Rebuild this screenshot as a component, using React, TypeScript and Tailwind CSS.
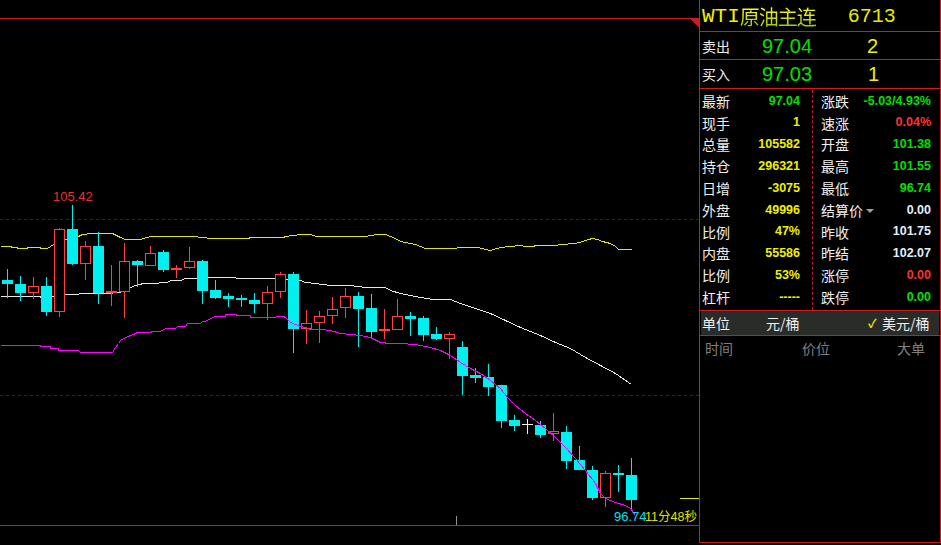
import React from "react";

// [bodyTop, bodyBottom, wickTop, wickBottom, kind] ; kind: c = falling (cyan), r = rising (red), w = doji
type Candle = [number, number, number, number, "c" | "r" | "w"];

const candles: Candle[] = [
  [280, 284, 269, 298, "c"],
  [284, 293, 276, 301, "c"],
  [286, 293, 277, 299, "r"],
  [286, 312, 277, 316, "c"],
  [229, 312, 228, 317, "r"],
  [229, 264, 205, 265, "c"],
  [246, 264, 241, 280, "r"],
  [246, 293, 232, 304, "c"],
  [291, 293, 265, 306, "r"],
  [261, 292, 243, 318, "r"],
  [261, 265, 260, 287, "c"],
  [253, 266, 246, 266, "r"],
  [252, 270, 250, 272, "c"],
  [268, 270, 265, 278, "r"],
  [261, 268, 247, 269, "r"],
  [261, 291, 260, 304, "c"],
  [290, 298, 280, 299, "c"],
  [296, 299, 293, 307, "c"],
  [298, 300, 295, 307, "c"],
  [300, 304, 293, 313, "c"],
  [292, 304, 286, 320, "r"],
  [274, 292, 272, 298, "r"],
  [274, 329, 272, 353, "c"],
  [323, 329, 310, 344, "r"],
  [316, 323, 311, 343, "r"],
  [309, 316, 297, 324, "r"],
  [296, 308, 288, 318, "r"],
  [296, 309, 292, 347, "c"],
  [308, 332, 294, 337, "c"],
  [329, 331, 309, 339, "r"],
  [316, 330, 299, 330, "r"],
  [316, 319, 312, 336, "c"],
  [318, 335, 316, 341, "c"],
  [334, 339, 327, 340, "c"],
  [334, 339, 332, 359, "r"],
  [347, 376, 341, 395, "c"],
  [375, 378, 368, 383, "c"],
  [377, 387, 364, 396, "c"],
  [385, 421, 385, 428, "c"],
  [420, 426, 415, 431, "c"],
  [424, 425, 419, 434, "w"],
  [425, 435, 421, 438, "c"],
  [431, 434, 413, 441, "r"],
  [432, 461, 426, 469, "c"],
  [460, 470, 446, 470, "c"],
  [470, 498, 466, 500, "c"],
  [473, 498, 471, 507, "r"],
  [473, 475, 465, 492, "c"],
  [475, 500, 458, 511, "c"],
];

const upper = [
  [0, 246], [10, 246], [12, 247], [17, 247], [17, 248], [27, 248], [27, 247], [40, 247], [40, 248], [47, 248],
  [50, 246], [53, 244], [57, 241], [60, 240], [70, 239], [74, 238], [78, 236], [82, 234], [92, 233], [112, 233],
  [116, 235], [120, 237], [125, 239], [140, 239], [143, 238], [150, 236], [195, 236], [200, 237], [212, 238],
  [248, 238], [250, 237], [283, 237], [285, 236], [300, 234], [310, 234], [316, 236], [365, 236], [370, 235],
  [378, 234], [385, 234], [390, 236], [395, 238], [400, 241], [410, 243], [415, 244], [420, 246], [425, 248],
  [455, 248], [458, 247], [478, 247], [485, 249], [490, 250], [493, 249], [500, 247], [510, 246], [520, 245],
  [525, 246], [533, 246], [535, 245], [555, 245], [560, 244], [575, 243], [582, 241], [588, 239], [592, 238],
  [597, 239], [602, 241], [610, 243], [615, 246], [618, 249], [631, 249],
];

const middle = [
  [0, 296], [40, 296], [40, 297], [49, 297], [50, 296], [57, 296], [57, 294], [78, 294], [79, 293], [112, 293],
  [113, 292], [120, 292], [122, 290], [128, 288], [135, 285], [143, 283], [157, 283], [160, 282], [167, 282],
  [170, 280], [180, 280], [185, 278], [195, 278], [205, 277], [235, 277], [236, 278], [280, 278], [285, 279],
  [300, 280], [305, 282], [315, 283], [330, 285], [350, 285], [365, 287], [385, 287], [390, 290], [400, 293],
  [420, 297], [433, 299], [450, 299], [460, 303], [475, 308], [490, 313], [505, 320], [520, 327], [540, 335],
  [555, 342], [570, 348], [585, 357], [600, 365], [615, 373], [631, 384],
];

const lower = [
  [0, 345], [40, 345], [40, 346], [50, 346], [50, 348], [58, 348], [58, 350], [78, 350], [80, 352], [112, 352],
  [115, 347], [118, 343], [120, 340], [125, 337], [133, 334], [137, 332], [150, 332], [152, 331], [160, 331],
  [165, 328], [175, 328], [177, 326], [185, 326], [187, 323], [200, 323], [202, 321], [205, 321], [210, 318],
  [215, 316], [225, 316], [225, 314], [235, 314], [237, 315], [250, 315], [250, 317], [275, 317], [276, 316],
  [283, 316], [285, 317], [290, 322], [295, 324], [300, 326], [305, 327], [310, 329], [320, 329], [330, 330],
  [340, 333], [360, 335], [370, 337], [380, 342], [390, 343], [400, 343], [415, 344], [420, 345], [430, 347],
  [440, 350], [450, 355], [460, 362], [470, 368], [480, 373], [490, 380], [500, 388], [507, 397], [515, 405],
  [525, 413], [535, 420], [545, 428], [555, 437], [565, 447], [575, 458], [585, 470], [595, 483], [600, 493],
  [605, 498], [615, 502], [625, 505], [630, 508], [635, 515],
];

const pts = (a: number[][]) => a.map(([x, y]) => `${x + 0.5},${y + 0.5}`).join(" ");

const CYAN = "#00f0f0";
const RED = "#ff4040";
const LINE = "#c81e1e";

const leftStats: [string, string, string][] = [
  ["最新", "97.04", "text-[#00e000]"],
  ["现手", "1", "text-[#f0f000]"],
  ["总量", "105582", "text-[#f0f000]"],
  ["持仓", "296321", "text-[#f0f000]"],
  ["日增", "-3075", "text-[#f0f000]"],
  ["外盘", "49996", "text-[#f0f000]"],
  ["比例", "47%", "text-[#f0f000]"],
  ["内盘", "55586", "text-[#f0f000]"],
  ["比例", "53%", "text-[#f0f000]"],
  ["杠杆", "-----", "text-[#f0f000]"],
];

const rightStats: [string, string, string][] = [
  ["涨跌", "-5.03/4.93%", "text-[#00e000]"],
  ["速涨", "0.04%", "text-[#ff3030]"],
  ["开盘", "101.38", "text-[#00e000]"],
  ["最高", "101.55", "text-[#00e000]"],
  ["最低", "96.74", "text-[#00e000]"],
  ["结算价", "0.00", "text-[#e0f0ff]"],
  ["昨收", "101.75", "text-[#e0f0ff]"],
  ["昨结", "102.07", "text-[#e0f0ff]"],
  ["涨停", "0.00", "text-[#ff3030]"],
  ["跌停", "0.00", "text-[#00e000]"],
];

const Chart = () => (
  <div className="relative w-[699px] h-[545px] shrink-0">
    <svg width={699} height={545} className="block" shapeRendering="crispEdges">
      <line x1={0} y1={18.5} x2={699} y2={18.5} stroke={LINE} />
      <polygon points="689,18 699,18 699,28" fill={LINE} />
      <line x1={0} y1={219.5} x2={699} y2={219.5} stroke="#8a0000" strokeDasharray="3 3" />
      <line x1={0} y1={395.5} x2={699} y2={395.5} stroke="#8a0000" strokeDasharray="3 3" />
      <line x1={0} y1={525.5} x2={699} y2={525.5} stroke={LINE} />
      <line x1={456.5} y1={516} x2={456.5} y2={525} stroke="#909090" />
      <line x1={680} y1={498.5} x2={699} y2={498.5} stroke="#e6e600" />

      <polyline points={pts(upper)} fill="none" stroke="#e6e600" />
      <polyline points={pts(middle)} fill="none" stroke="#e8e8e8" />

      {candles.map(([t, b, wt, wb, k], i) => {
        const x = 2 + 13 * i;
        if (k === "c")
          return (
            <g key={i}>
              <rect x={x + 5} y={wt} width={1} height={wb - wt} fill={CYAN} />
              <rect x={x} y={t} width={11} height={Math.max(b - t, 1)} fill={CYAN} />
            </g>
          );
        if (k === "w")
          return (
            <g key={i}>
              <rect x={x + 5} y={wt} width={1} height={wb - wt} fill="#f0f0f0" />
              <rect x={x} y={t} width={11} height={1} fill="#f0f0f0" />
            </g>
          );
        return (
          <g key={i}>
            <rect x={x + 5} y={wt} width={1} height={wb - wt} fill={RED} />
            <rect x={x + 0.5} y={t + 0.5} width={10} height={Math.max(b - t - 1, 1)} fill="#000" stroke={RED} />
          </g>
        );
      })}

      <polyline points={pts(lower)} fill="none" stroke="#ff00ff" />
    </svg>

    <span className="absolute left-[53px] top-[190px] text-[13px] leading-[14px] text-[#e83030] font-['Liberation_Sans',sans-serif]">
      105.42
    </span>
    <span className="absolute left-[614px] top-[510px] text-[13px] leading-[14px] text-[#00e0f0] font-['Liberation_Sans',sans-serif]">
      96.74
    </span>
    <span className="absolute left-[645px] top-[510px] text-[12.5px] leading-[14px] text-[#e0e000] font-['Liberation_Sans','Noto_Sans_CJK_SC',sans-serif]">
      11分48秒
    </span>
  </div>
);

const Panel = () => (
  <div className="w-[242px] h-[543px] border-l border-r border-b border-[#c81e1e] flex flex-col font-['Liberation_Sans','Noto_Sans_CJK_SC',sans-serif]">
    {/* title */}
    <div className="h-[32px] border-b border-[#c81e1e] flex items-center pl-[2px] pt-[2px]">
      <span className="text-[21px] leading-none font-['Liberation_Mono',monospace] text-[#f0f000]">WTI</span>
      <span className="text-[20px] tracking-[-1px] leading-none font-['Noto_Sans_CJK_SC',sans-serif] bg-gradient-to-b from-[#ffff20] to-[#a8c800] bg-clip-text text-transparent">
        原油主连
      </span>
      <span className="ml-[32px] text-[20px] leading-none font-['Liberation_Mono',monospace] text-[#e8e800]">6713</span>
    </div>

    {/* bid / ask */}
    <div className="h-[28px] border-b border-[#c81e1e] flex items-center pl-[2px]">
      <span className="w-[60px] text-[14px] leading-none text-[#f0f0f0] font-['Noto_Sans_CJK_SC',sans-serif]">卖出</span>
      <span className="w-[105px] text-[20px] leading-none text-[#00e000]">97.04</span>
      <span className="text-[20px] leading-none text-[#f0f000]">2</span>
    </div>
    <div className="h-[29px] border-b border-[#c81e1e] flex items-center pl-[2px]">
      <span className="w-[60px] text-[14px] leading-none text-[#f0f0f0] font-['Noto_Sans_CJK_SC',sans-serif]">买入</span>
      <span className="w-[105px] text-[20px] leading-none text-[#00e000]">97.03</span>
      <span className="text-[20px] leading-none text-[#f0f000] pl-[1px]">1</span>
    </div>

    {/* stats */}
    <div className="h-[222px] border-b border-[#c81e1e] flex pt-[1px]">
      <div className="w-[113px] border-r border-dashed border-[#c81e1e] flex flex-col">
        {leftStats.map(([l, v, c], i) => (
          <div key={i} className="h-[21.8px] flex items-center justify-between pl-[2px] pr-[12px]">
            <span className="text-[14px] leading-none text-[#f0f0f0] font-['Noto_Sans_CJK_SC',sans-serif]">{l}</span>
            <span className={`text-[12.5px] leading-none font-bold ${c}`}>{v}</span>
          </div>
        ))}
      </div>
      <div className="flex-1 flex flex-col">
        {rightStats.map(([l, v, c], i) => (
          <div key={i} className="h-[21.8px] flex items-center justify-between pl-[8px] pr-[9px]">
            <span className="flex items-center text-[14px] leading-none text-[#f0f0f0] font-['Noto_Sans_CJK_SC',sans-serif]">
              {l}
              {l === "结算价" && (
                <span className="ml-[3px] mt-[2px] inline-block w-0 h-0 border-l-[4px] border-r-[4px] border-t-[4px] border-l-transparent border-r-transparent border-t-[#a0a0a0]" />
              )}
            </span>
            <span className={`text-[12.5px] leading-none font-bold ${c}`}>{v}</span>
          </div>
        ))}
      </div>
    </div>

    {/* unit */}
    <div className="h-[25px] border-b border-[#c81e1e] flex">
      <div className="flex-1 mx-[1px] bg-[#2a2c29] flex items-center text-[14px] leading-none text-[#f0f0f0] font-['Noto_Sans_CJK_SC',sans-serif]">
        <span className="w-[65px] pl-[1px]">单位</span>
        <span className="w-[102px]">元/桶</span>
        <span className="w-[14px] text-[#e6e600] text-[12px] font-bold">✓</span>
        <span>美元/桶</span>
      </div>
    </div>

    {/* ticks header */}
    <div className="h-[24px] flex items-center text-[14px] leading-none text-[#808080] font-['Noto_Sans_CJK_SC',sans-serif]">
      <span className="w-[102px] pl-[5px]">时间</span>
      <span className="w-[95px]">价位</span>
      <span>大单</span>
    </div>
    <div className="flex-1" />
  </div>
);

export default function App() {
  return (
    <div className="w-[941px] h-[545px] bg-black flex overflow-hidden">
      <Chart />
      <Panel />
    </div>
  );
}
